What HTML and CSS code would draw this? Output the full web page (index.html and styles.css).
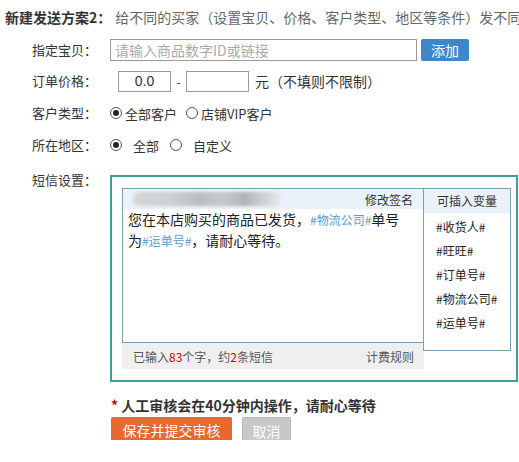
FILE: index.html
```html
<!DOCTYPE html>
<html lang="zh-CN">
<head>
<meta charset="utf-8">
<title>新建发送方案</title>
<link rel="stylesheet" href="styles.css">
</head>
<body>
<div class="page">
  <div class="title"><b>新建发送方案2：</b><span class="desc">给不同的买家（设置宝贝、价格、客户类型、地区等条件）发不同</span></div>

  <div class="row row-item">
    <span class="label">指定宝贝：</span>
    <input class="field field-item" type="text" placeholder="请输入商品数字ID或链接">
    <button class="btn-add" type="button">添加</button>
  </div>

  <div class="row row-price">
    <span class="label">订单价格：</span>
    <input class="field field-min" type="text" value="0.0">
    <span class="dash">-</span>
    <input class="field field-max" type="text" value="">
    <span class="unit">元（不填则不限制）</span>
  </div>

  <div class="row row-type">
    <span class="label">客户类型：</span>
    <span class="radio checked"></span><span class="opt">全部客户</span>
    <span class="radio"></span><span class="opt">店铺VIP客户</span>
  </div>

  <div class="row row-area">
    <span class="label">所在地区：</span>
    <span class="radio checked"></span><span class="opt opt-wide">全部</span>
    <span class="radio"></span><span class="opt opt-wide">自定义</span>
  </div>

  <div class="row row-sms">
    <span class="label">短信设置：</span>
    <div class="sms-box">
      <div class="sms-main">
        <div class="editor">
          <div class="editor-head">
            <span class="sign"></span>
            <span class="edit-sign">修改签名</span>
          </div>
          <div class="editor-body"><span class="line">您在本店购买的商品已发货，<span class="var">#物流公司#</span>单号</span><br><span class="line">为<span class="var">#运单号#</span>，请耐心等待。</span></div>
        </div>
        <div class="editor-foot">
          <span class="count">已输入<em>83</em>个字，约<em>2</em>条短信</span>
          <span class="rule">计费规则</span>
        </div>
      </div>
      <div class="vars">
        <div class="vars-head">可插入变量</div>
        <ul class="vars-list">
          <li>#收货人#</li>
          <li>#旺旺#</li>
          <li>#订单号#</li>
          <li>#物流公司#</li>
          <li>#运单号#</li>
        </ul>
      </div>
    </div>
  </div>

  <div class="submit">
    <p class="note"><span class="star">*</span> 人工审核会在40分钟内操作，请耐心等待</p>
    <div class="actions">
      <button class="btn-save" type="button">保存并提交审核</button>
      <button class="btn-cancel" type="button">取消</button>
    </div>
  </div>
</div>
</body>
</html>
```

FILE: styles.css
```css
* {
  box-sizing: border-box;
}

html, body {
  margin: 0;
  padding: 0;
  background: #fff;
  overflow: hidden;
}

body {
  font-family: "Noto Sans CJK SC", "Microsoft YaHei", sans-serif;
  color: #333;
  font-size: 13px;
  text-spacing-trim: space-all;
}

.page {
  width: 519px;
  overflow: hidden;
}

/* heading line */
.title {
  margin-top: 7px;
  padding-left: 5px;
  line-height: 20px;
  font-size: 14px;
  white-space: nowrap;
}

.title b {
  color: #333;
  font-weight: bold;
}

.title .desc {
  color: #666;
  margin-left: 4px;
}

/* form rows */
.row {
  display: flex;
  align-items: center;
  padding-left: 32px;
  white-space: nowrap;
}

.label {
  width: 78px;
  flex: none;
  color: #333;
  font-size: 13px;
  line-height: 20px;
}

.row-item {
  margin-top: 7px;
  height: 32px;
}

.row-price {
  height: 30px;
}

.row-type {
  height: 34px;
}

.row-area {
  height: 30px;
}

.field {
  height: 22px;
  border: 1px solid #9a9a9a;
  padding: 0 4px;
  font-family: inherit;
  font-size: 14px;
  color: #333;
  outline: none;
  background: #fff;
}

.field::placeholder {
  color: #aaa;
}

.field-item {
  width: 307px;
}

.btn-add {
  margin-left: 4px;
  width: 48px;
  height: 22px;
  border: 0;
  border-radius: 2px;
  background: #3d87c8;
  color: #fff;
  font-family: inherit;
  font-size: 14px;
  padding: 0;
  line-height: 22px;
}

.field-min,
.field-max {
  height: 21px;
  text-align: center;
  font-family: "Liberation Sans", Arial, sans-serif;
  font-size: 14px;
}

.field-min {
  margin-left: 8px;
  width: 53px;
}

.field-max {
  width: 63px;
}

.dash {
  width: 15px;
  text-align: center;
  color: #555;
}

.unit {
  margin-left: 6px;
  font-size: 14px;
  color: #333;
}

/* radio buttons */
.radio {
  width: 12px;
  height: 12px;
  border: 1px solid #555;
  border-radius: 50%;
  flex: none;
  position: relative;
  background: #fff;
}

.row .radio:first-of-type {
  margin-left: 5px;
}

.radio.checked::after {
  content: "";
  position: absolute;
  left: 2px;
  top: 2px;
  width: 6px;
  height: 6px;
  border-radius: 50%;
  background: #222;
}

.opt {
  margin-left: 3px;
  margin-right: 9px;
  font-size: 13px;
}

.opt-wide {
  margin-left: 11px;
  margin-right: 11px;
}

/* message settings */
.row-sms {
  align-items: flex-start;
  margin-top: 10px;
}

.sms-box {
  margin-top: 5px;
  width: 408px;
  flex: none;
  border: 2px solid #3c9f98;
  padding: 11px 0 11px 10px;
  display: flex;
  align-items: flex-start;
}

.sms-main {
  width: 302px;
  flex: none;
}

.editor {
  height: 155px;
  border: 1px solid #7d9db0;
  background: #fff;
}

.editor-head {
  height: 20px;
  background: #e9f1fa;
  display: flex;
  align-items: center;
  justify-content: space-between;
  padding: 0 10px 0 10px;
}

.sign {
  width: 148px;
  height: 14px;
  border-radius: 7px;
  background: linear-gradient(to right, #d6d6d6 0%, #d0d0d0 25%, #bdbdbd 45%, #c9c9c9 60%, #b3b3b3 75%, #d0d0d0 88%, #e6e9ee 100%);
  filter: blur(1.5px);
}

.edit-sign {
  font-size: 12px;
  color: #333;
}

.editor-body {
  padding: 0 5px;
  font-size: 14px;
  line-height: 21px;
  color: #222;
  white-space: nowrap;
}

.var {
  color: #5b9cc9;
  font-size: 12px;
}

.editor-foot {
  height: 26px;
  background: #efefef;
  display: flex;
  align-items: center;
  justify-content: space-between;
  padding: 0 10px 0 11px;
  font-size: 12px;
  color: #555;
}

.count em {
  font-style: normal;
  color: #c00;
}

/* variable list */
.vars {
  width: 88px;
  height: 163px;
  margin-left: -1px;
  border: 1px solid #7d9db0;
  background: #fff;
  flex: none;
}

.vars-head {
  height: 24px;
  line-height: 24px;
  background: #e9f1fa;
  text-align: center;
  font-size: 12px;
  color: #333;
}

.vars-list {
  list-style: none;
  margin: 2px 0 0;
  padding: 0 0 0 12px;
}

.vars-list li {
  height: 24px;
  line-height: 24px;
  font-size: 12px;
  color: #222;
}

/* submit area */
.submit {
  padding-left: 111px;
  margin-top: 13px;
}

.note {
  margin: 0;
  line-height: 20px;
  font-size: 14px;
  font-weight: bold;
  color: #333;
  white-space: nowrap;
}

.star {
  color: #c00;
}

.actions {
  display: flex;
  margin-top: 2px;
  gap: 10px;
}

.btn-save,
.btn-cancel {
  height: 23px;
  padding: 3px 0 0;
  border: 0;
  border-radius: 2px 2px 0 0;
  color: #fff;
  font-family: inherit;
  font-size: 14px;
  line-height: 20px;
}

.btn-save {
  width: 121px;
  background: #e8692f;
}

.btn-cancel {
  width: 49px;
  background: #c8c8c8;
  border: 1px solid #b8b8b8;
  border-bottom: 0;
}
```
